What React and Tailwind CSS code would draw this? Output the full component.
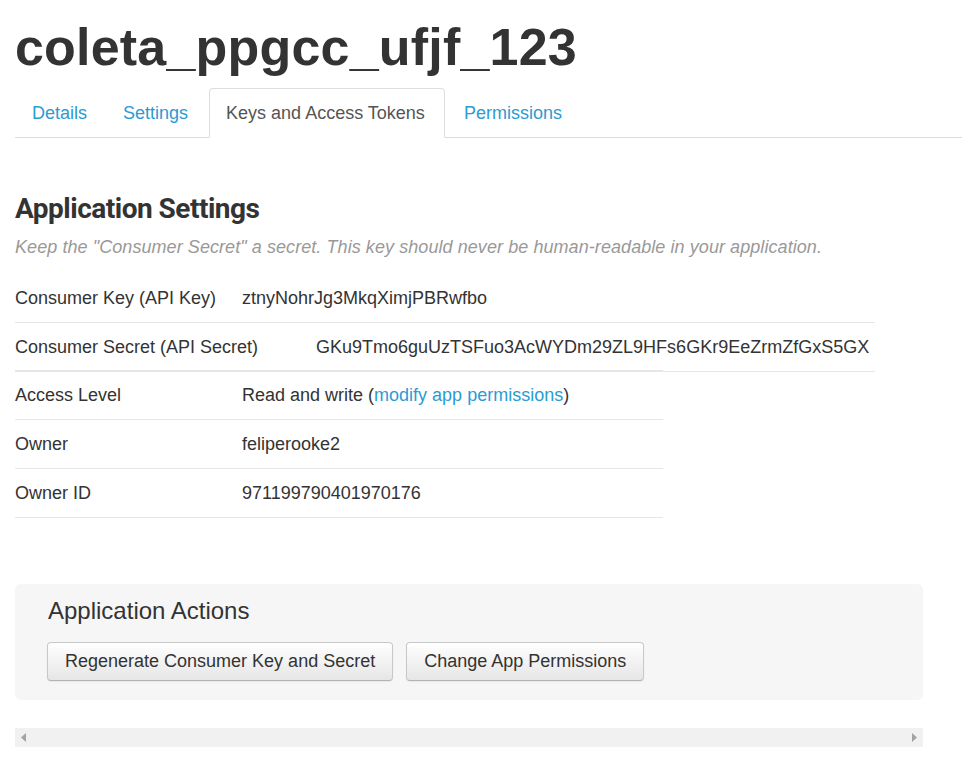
import React from "react";

const tabs = [
  { label: "Details", cls: "mr-[2px] px-[16px]" },
  { label: "Settings", cls: "mr-[4px] px-[16px]" },
  { label: "Keys and Access Tokens", active: true, cls: "mr-[2px] pl-[16px] pr-[19px]" },
  { label: "Permissions", cls: "mr-[2px] px-[16px]" },
];

function Row({ label, labelWidth, children }) {
  return (
    <div className="flex py-[11px] leading-[26px] border-b border-[#e6e6e6]">
      <div className={labelWidth}>{label}</div>
      <div>{children}</div>
    </div>
  );
}

function Button({ children }) {
  return (
    <button className="h-[39px] px-[17px] text-[18px] text-[#333] border border-[#c8c8c8] border-b-[#b3b3b3] rounded-[4px] bg-gradient-to-b from-white to-[#e6e6e6] shadow-[0_1px_2px_rgba(0,0,0,0.06)]">
      {children}
    </button>
  );
}

export default function App() {
  return (
    <div
      className="min-h-screen bg-white pl-[15px] pt-[17px] text-[#333]"
      style={{ fontFamily: '"Liberation Sans", Arial, sans-serif' }}
    >
      {/* Title */}
      <h1 className="text-[52px] leading-[60px] font-bold text-[#333] tracking-[0.2px]">
        coleta_ppgcc_ufjf_123
      </h1>

      {/* Tabs */}
      <ul className="flex mt-[11px] border-b border-[#dddddd]">
        {tabs.map((t) => (
          <li
            key={t.label}
            className={
              t.active
                ? `${t.cls} h-[50px] -mb-px flex items-center text-[18px] text-[#555] bg-white border border-[#dddddd] border-b-white rounded-t-[4px]`
                : `${t.cls} h-[50px] -mb-px flex items-center text-[18px] text-[#2b9bd3] border border-transparent`
            }
          >
            {t.label}
          </li>
        ))}
      </ul>

      {/* Application Settings */}
      <h2
        className="mt-[55px] text-[28px] leading-[32px] font-bold tracking-[-0.5px] text-[#333]"
        style={{ fontFamily: "Roboto, sans-serif" }}
      >
        Application Settings
      </h2>
      <p className="mt-[10px] text-[18px] leading-[24px] italic text-[#999] tracking-[0.07px]">
        Keep the "Consumer Secret" a secret. This key should never be human-readable in your application.
      </p>

      <div className="mt-[15px] text-[18px] text-[#333]">
        <div className="w-[860px]">
          <Row label="Consumer Key (API Key)" labelWidth="w-[227px]">
            ztnyNohrJg3MkqXimjPBRwfbo
          </Row>
          <Row label="Consumer Secret (API Secret)" labelWidth="w-[301px]">
            GKu9Tmo6guUzTSFuo3AcWYDm29ZL9HFs6GKr9EeZrmZfGxS5GX
          </Row>
        </div>
        <div className="w-[648px] -mt-[2px] border-t border-[#e6e6e6]">
          <Row label="Access Level" labelWidth="w-[227px]">
            Read and write (<span className="text-[#2b9bd3]">modify app permissions</span>)
          </Row>
          <Row label="Owner" labelWidth="w-[227px]">
            feliperooke2
          </Row>
          <Row label="Owner ID" labelWidth="w-[227px]">
            971199790401970176
          </Row>
        </div>
      </div>

      {/* Application Actions */}
      <div className="mt-[66px] w-[908px] bg-[#f6f6f6] rounded-[6px] pl-[32px] pt-[13px] pb-[19px]">
        <h3 className="text-[24px] leading-[28px] text-[#333] pl-px">Application Actions</h3>
        <div className="mt-[17px] flex gap-[13px]">
          <Button>Regenerate Consumer Key and Secret</Button>
          <Button>Change App Permissions</Button>
        </div>
      </div>

      {/* horizontal scrollbar */}
      <div className="mt-[28px] w-[908px] h-[19px] bg-[#f1f1f1] flex items-center justify-between px-[6px]">
        <svg width="6" height="9" viewBox="0 0 6 9">
          <path d="M5 0 L0 4.5 L5 9 Z" fill="#a3a3a3" />
        </svg>
        <svg width="6" height="9" viewBox="0 0 6 9">
          <path d="M1 0 L6 4.5 L1 9 Z" fill="#a3a3a3" />
        </svg>
      </div>
    </div>
  );
}
